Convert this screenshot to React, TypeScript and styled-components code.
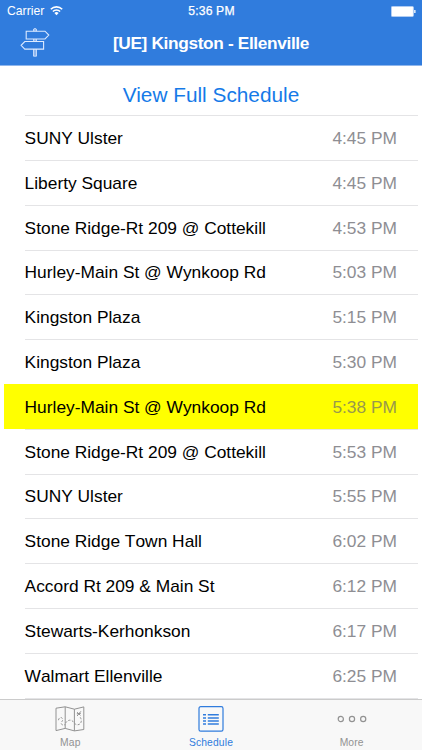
import React from "react";
import styled, { createGlobalStyle } from "styled-components";

const GlobalStyle = createGlobalStyle`
  * { box-sizing: border-box; }
  body { margin: 0; background: #fff; }
`;

const Screen = styled.div`
  width: 422px;
  height: 750px;
  display: flex;
  flex-direction: column;
  overflow: hidden;
  background: #fff;
  font-family: "Liberation Sans", Arial, sans-serif;
  -webkit-font-smoothing: antialiased;
`;

const Header = styled.header`
  flex: none;
  height: 66px;
  background: #307cdd;
  border-bottom: 1px solid #8fb6ec;
  color: #fff;
`;

const StatusBar = styled.div`
  display: grid;
  grid-template-columns: 1fr auto 1fr;
  align-items: center;
  height: 22px;
  padding: 0 6px 0 7px;
  font-size: 12.2px;
`;

const Carrier = styled.div`
  display: flex;
  align-items: center;
  gap: 6px;
`;

const Clock = styled.span`
  letter-spacing: 0.15px;
  -webkit-text-stroke: 0.25px #fff;
`;

const BatterySlot = styled.div`
  display: flex;
  justify-content: flex-end;
`;

const NavBar = styled.div`
  display: grid;
  grid-template-columns: 70px 1fr 70px;
  align-items: center;
  height: 43px;
`;

const SignButton = styled.button`
  display: flex;
  padding: 0 0 1px 20px;
  border: 0;
  background: none;
`;

const Title = styled.h1`
  margin: 0;
  text-align: center;
  font-size: 17.3px;
  font-weight: 700;
  letter-spacing: -0.36px;
  white-space: nowrap;
`;

const Content = styled.main`
  flex: 1;
  min-height: 0;
  overflow: hidden;
  padding: 0 4px;
`;

const ScheduleLink = styled.button`
  display: flex;
  align-items: center;
  justify-content: center;
  width: 100%;
  height: 49.2px;
  padding: 9px 0 0;
  border: 0;
  background: none;
  color: #157ae8;
  font: 20.8px "Liberation Sans", Arial, sans-serif;
  white-space: nowrap;
`;

const StopList = styled.ul`
  margin: 0;
  padding: 0;
  list-style: none;
`;

const Stop = styled.li<{ $current?: boolean }>`
  display: flex;
  align-items: center;
  justify-content: space-between;
  height: 44.8px;
  padding: 2px 21px 0 20.6px;
  font-size: 17.35px;
  font-kerning: none;
  white-space: nowrap;
  background: ${(p) =>
    p.$current
      ? "#ff0"
      : "linear-gradient(#e4e4e6, #e4e4e6) 21px 0 / 100% 1px no-repeat"};
`;

const StopName = styled.span`
  color: #000;
`;

const StopTime = styled.time<{ $current?: boolean }>`
  color: ${(p) => (p.$current ? "#98984c" : "#8e8e93")};
`;

const TabBar = styled.nav`
  flex: none;
  display: grid;
  grid-template-columns: repeat(3, 1fr);
  height: 51px;
  border-top: 1px solid #cbcbcb;
  background: #f8f8f8;
`;

const Tab = styled.button<{ $active?: boolean }>`
  display: flex;
  flex-direction: column;
  align-items: center;
  justify-content: space-between;
  padding: 6px 0 2px;
  border: 0;
  background: none;
  color: ${(p) => (p.$active ? "#307cdd" : "#929292")};
  font: 10.3px "Liberation Sans", Arial, sans-serif;
  letter-spacing: 0.15px;
`;

const WifiIcon = () => (
  <svg width="13" height="10" viewBox="0 0 13 10" fill="none" stroke="#fff" strokeWidth="1.6">
    <path d="M.8 3.3a8 8 0 0 1 11.4 0M2.9 5.5a5.1 5.1 0 0 1 7.2 0" />
    <path d="M4.4 7.1a3 3 0 0 1 4.2 0L6.5 9.3Z" fill="#fff" stroke="none" />
  </svg>
);

const BatteryIcon = () => (
  <svg width="25" height="11" viewBox="0 0 25 11">
    <rect x=".4" y=".4" width="22" height="10.2" rx="1" fill="#fff" stroke="#b7d1f5" strokeWidth=".8" />
    <path d="M23.2 4h1.3v3h-1.3z" fill="#fff" />
  </svg>
);

const SignpostIcon = () => (
  <svg width="30" height="30" viewBox="0 0 30 30" fill="#307cdd" stroke="#dceaff" strokeWidth="1.1">
    <path d="M13.5 28.2V1.2q1.5-1.6 3 0v27Z" fill="#8db5ed" strokeWidth=".8" />
    <path d="M6.2 3.2H25l3.8 3.9-3.8 3.9H6.2ZM23.6 13.5H4.8l-3.7 3.8 3.7 3.8h18.8Z" />
  </svg>
);

const MapIcon = () => (
  <svg width="30" height="26" viewBox="0 0 30 26" fill="none" stroke="currentColor" strokeWidth="1">
    <path d="M1 2.2 10.2.8l9.2 2.4L28.8.9v22.6l-9.4 1.4-9.2-2.5L1 24.6ZM10.2.8v21.6M19.4 3.2v21.7" />
    <path d="M3.5 14.2c0-3 4.2-3.8 4.2-.5 0 2.3-2 1.5-1.4 4 .4 1.4 2.4 1.8 4 .8M10.5 17c2-3 5.5-3.8 7.4-1.6 2 2.5 3.6 4.2 6.2 3 2.4-1.1 3.1-4.5.8-7.6" strokeDasharray="2.2 1.5" />
    <path d="m22 6.2 3.5 3.2m.4-4.1-3.8 4.7M21.8 7.8l4-.4" />
  </svg>
);

const ScheduleIcon = () => (
  <svg width="26" height="26" viewBox="0 0 26 26" fill="none" stroke="currentColor">
    <rect x="1" y=".7" width="24" height="24.5" rx="1.7" strokeWidth="1.2" />
    <path d="M5 8.8h3m1.8 0h11M5 11.9h3m1.8 0h11M5 15h3m1.8 0h11M5 18.1h3m1.8 0h11" strokeWidth="1.5" />
  </svg>
);

const MoreIcon = () => (
  <svg width="30" height="26" viewBox="0 0 30 26" fill="none" stroke="currentColor" strokeWidth="1.2">
    <circle cx="3.8" cy="13" r="2.6" />
    <circle cx="15" cy="13" r="2.6" />
    <circle cx="26.2" cy="13" r="2.6" />
  </svg>
);

const stops = [
  { name: "SUNY Ulster", time: "4:45 PM" },
  { name: "Liberty Square", time: "4:45 PM" },
  { name: "Stone Ridge-Rt 209 @ Cottekill", time: "4:53 PM" },
  { name: "Hurley-Main St @ Wynkoop Rd", time: "5:03 PM" },
  { name: "Kingston Plaza", time: "5:15 PM" },
  { name: "Kingston Plaza", time: "5:30 PM" },
  { name: "Hurley-Main St @ Wynkoop Rd", time: "5:38 PM", current: true },
  { name: "Stone Ridge-Rt 209 @ Cottekill", time: "5:53 PM" },
  { name: "SUNY Ulster", time: "5:55 PM" },
  { name: "Stone Ridge Town Hall", time: "6:02 PM" },
  { name: "Accord Rt 209 & Main St", time: "6:12 PM" },
  { name: "Stewarts-Kerhonkson", time: "6:17 PM" },
  { name: "Walmart Ellenville", time: "6:25 PM" },
];

export default function App() {
  return (
    <>
      <GlobalStyle />
      <Screen>
        <Header>
          <StatusBar>
            <Carrier>
              Carrier
              <WifiIcon />
            </Carrier>
            <Clock>5:36 PM</Clock>
            <BatterySlot>
              <BatteryIcon />
            </BatterySlot>
          </StatusBar>
          <NavBar>
            <SignButton aria-label="Routes">
              <SignpostIcon />
            </SignButton>
            <Title>[UE] Kingston - Ellenville</Title>
          </NavBar>
        </Header>
        <Content>
          <ScheduleLink>View Full Schedule</ScheduleLink>
          <StopList>
            {stops.map((stop, i) => (
              <Stop key={i} $current={stop.current}>
                <StopName>{stop.name}</StopName>
                <StopTime $current={stop.current}>{stop.time}</StopTime>
              </Stop>
            ))}
            <Stop aria-hidden="true" />
          </StopList>
        </Content>
        <TabBar>
          <Tab>
            <MapIcon />
            Map
          </Tab>
          <Tab $active>
            <ScheduleIcon />
            Schedule
          </Tab>
          <Tab>
            <MoreIcon />
            More
          </Tab>
        </TabBar>
      </Screen>
    </>
  );
}
